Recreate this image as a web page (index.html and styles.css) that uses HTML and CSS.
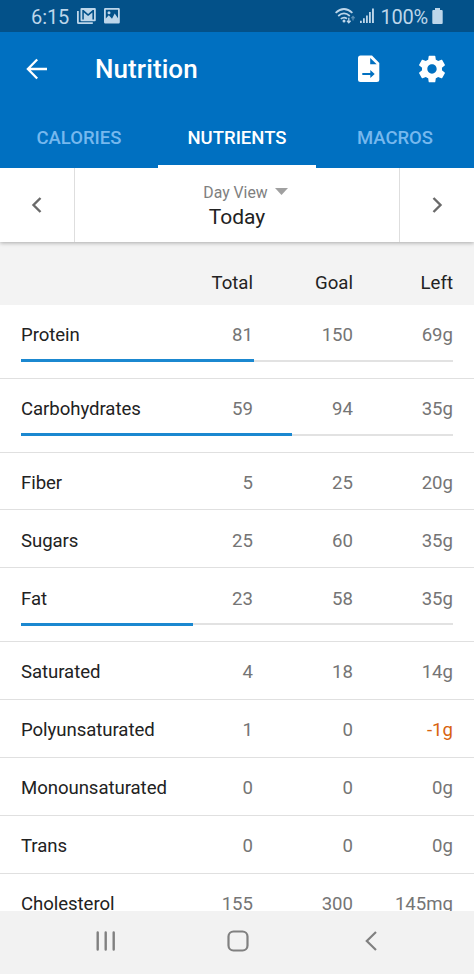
FILE: index.html
```html
<!DOCTYPE html>
<html lang="en">
<head>
<meta charset="utf-8">
<title>Nutrition</title>
<link rel="stylesheet" href="styles.css">
</head>
<body>
<div class="screen">
  <div class="status">
    <span class="clock">6:15</span>
    <svg class="mail" width="20" height="17" viewBox="0 0 20 17" fill="currentColor"><path d="M0 3h1.800v11.300h14V16H1.500Q0 16 0 14.500z"/><path fill-rule="evenodd" d="M4.500 0h13.300q1 0 1 1v11.200q0 1-1 1H4.500q-1 0-1-1V1q0-1 1-1zM5.300 2v9.500h1.500V4.600l4.300 3.500 4.300-3.500v6.900H17V2h-1.300l-4.600 3.900L6.600 2z"/></svg>
    <svg class="photo" width="16" height="16" viewBox="0 0 16 16" fill="currentColor"><path fill-rule="evenodd" d="M1.200 0h13.400q1.200 0 1.200 1.200v13q0 1.200-1.200 1.200H1.200Q0 15.400 0 14.200v-13Q0 0 1.200 0zM1.800 1.800v8.700l3-3.200 3.200 3.500 2.700-5.200 3.300 4.600V1.800zM5 3.200a1.500 1.500 0 1 1 0 3 1.500 1.500 0 0 1 0-3z"/></svg>
    <svg class="wifi" width="21" height="17" viewBox="0 0 21 17" fill="none" stroke="currentColor" stroke-width="1.700"><path d="M.6 4.800Q9 -2.800 17.400 4.800M3.200 8Q9 2.800 14.800 8M5.800 10.900Q9 8.300 12 10.700"/><circle cx="9" cy="13" r="1.500" fill="currentColor" stroke="none"/><path stroke-width="1.300" d="M13.800 9.800v4.700M12 12.800l1.800 1.900 1.800-1.900"/><path opacity=".45" stroke-width="1.300" d="M18 12.500V8.700M16.400 10.200L18 8.500l1.600 1.700"/></svg>
    <svg class="signal" width="15" height="16" viewBox="0 0 15 16" fill="currentColor"><path d="M0 12.700h1.800V15H0zM3 10.300h1.800V15H3zM6 7.500h1.800V15H6zM9 4h1.800v11H9zM12 .5h1.900V15H12z"/></svg>
    <span class="percent">100%</span>
    <svg class="battery" width="11" height="17" viewBox="0 0 11 17" fill="currentColor"><path d="M3 0h5v2h1.700q1 0 1 1v12q0 1-1 1H1.300q-1 0-1-1V3q0-1 1-1H3z"/></svg>
  </div>
  <header class="appbar">
    <svg class="back" width="22" height="22" viewBox="0 0 22 22" fill="none" stroke="#fff" stroke-width="2.300"><path d="M21 11H2M11.200 1.500L1.900 11l9.300 9.500"/></svg>
    <h1>Nutrition</h1>
    <svg class="export" width="22" height="28" viewBox="0 0 22 28"><path fill="#fff" d="M2.500.5H14L21.300 8v16.500q0 2.500-2.500 2.500H2.500Q0 27 0 24.500V3Q0 .5 2.500.5z"/><path fill="#0070c1" d="M12.200 3v6.300h6.500zM4.300 18h8v-3l4.400 4-4.400 4v-3h-8z"/></svg>
    <svg class="gear" width="32" height="32" viewBox="0 0 24 24" fill="#fff"><path d="M19.430 12.980c.04-.32.07-.64.07-.98s-.03-.66-.07-.98l2.110-1.650c.19-.15.24-.42.12-.64l-2-3.460c-.12-.22-.39-.3-.61-.22l-2.490 1c-.52-.4-1.080-.73-1.690-.98l-.38-2.650C14.460 2.180 14.250 2 14 2h-4c-.25 0-.46.18-.49.42l-.38 2.650c-.61.25-1.170.59-1.690.98l-2.490-1c-.23-.09-.49 0-.61.22l-2 3.460c-.13.22-.07.49.12.64l2.110 1.650c-.04.32-.07.65-.07.98s.03.66.07.98l-2.110 1.650c-.19.15-.24.42-.12.64l2 3.460c.12.22.39.3.61.22l2.490-1c.52.4 1.080.73 1.690.98l.38 2.650c.03.24.24.42.49.42h4c.25 0 .46-.18.49-.42l.38-2.650c.61-.25 1.170-.59 1.690-.98l2.490 1c.23.09.49 0 .61-.22l2-3.460c.12-.22.07-.49-.12-.64l-2.110-1.650zM12 15.500c-1.930 0-3.500-1.570-3.500-3.500s1.570-3.500 3.500-3.500 3.500 1.570 3.500 3.500-1.570 3.500-3.500 3.500z"/></svg>
  </header>
  <nav class="tabs">
    <div class="tab">CALORIES</div>
    <div class="tab active">NUTRIENTS</div>
    <div class="tab">MACROS</div>
  </nav>
  <div class="picker">
    <div class="step"><svg width="12" height="16" viewBox="0 0 12 16" fill="none" stroke="#6a6a6a" stroke-width="2.400"><path d="M9.500 1L2.500 8l7 7"/></svg></div>
    <div class="day">
      <div class="view">Day View<svg width="13" height="7" viewBox="0 0 13 7"><path fill="#a0a0a0" d="M0 0h13L6.500 7z"/></svg></div>
      <div class="date">Today</div>
    </div>
    <div class="step"><svg width="12" height="16" viewBox="0 0 12 16" fill="none" stroke="#6a6a6a" stroke-width="2.400"><path d="M2.500 1l7 7-7 7"/></svg></div>
  </div>
  <div class="cols heading"><span></span><span>Total</span><span>Goal</span><span>Left</span></div>
  <main class="list">
    <div class="row goal"><div class="cols"><b>Protein</b><span>81</span><span>150</span><span>69g</span></div><div class="track"><div class="fill" style="width:54%"></div></div></div>
    <div class="row goal"><div class="cols"><b>Carbohydrates</b><span>59</span><span>94</span><span>35g</span></div><div class="track"><div class="fill" style="width:62.800%"></div></div></div>
    <div class="row"><div class="cols"><b>Fiber</b><span>5</span><span>25</span><span>20g</span></div></div>
    <div class="row"><div class="cols"><b>Sugars</b><span>25</span><span>60</span><span>35g</span></div></div>
    <div class="row goal"><div class="cols"><b>Fat</b><span>23</span><span>58</span><span>35g</span></div><div class="track"><div class="fill" style="width:39.700%"></div></div></div>
    <div class="row"><div class="cols"><b>Saturated</b><span>4</span><span>18</span><span>14g</span></div></div>
    <div class="row"><div class="cols"><b>Polyunsaturated</b><span>1</span><span>0</span><span class="over">-1g</span></div></div>
    <div class="row"><div class="cols"><b>Monounsaturated</b><span>0</span><span>0</span><span>0g</span></div></div>
    <div class="row"><div class="cols"><b>Trans</b><span>0</span><span>0</span><span>0g</span></div></div>
    <div class="row"><div class="cols"><b>Cholesterol</b><span>155</span><span>300</span><span>145mg</span></div></div>
  </main>
  <footer class="softkeys">
    <svg width="20" height="20" viewBox="0 0 20 20" fill="none" stroke="#808080" stroke-width="2.400" stroke-linecap="round"><path d="M1.700 1.500v17M9.700 1.500v17M17.700 1.500v17"/></svg>
    <svg class="home" width="22" height="22" viewBox="0 0 22 22" fill="none" stroke="#808080" stroke-width="2.200"><rect x="1.500" y="1.500" width="19" height="19" rx="5"/></svg>
    <svg width="12" height="20" viewBox="0 0 12 20" fill="none" stroke="#808080" stroke-width="2.200"><path d="M11 1L1.800 10l9.200 9"/></svg>
  </footer>
</div>
</body>
</html>
```
FILE: styles.css
```css
* { box-sizing: border-box; }
body { margin: 0; font-family: Roboto, "Liberation Sans", sans-serif; background: #fff; }
svg { display: block; flex: none; }
.screen { width: 474px; height: 974px; display: flex; flex-direction: column; overflow: hidden; }
.screen > * { flex: none; }

.status { height: 32px; background: #035189; color: #bdd6ea; display: flex; align-items: center; padding: 0 31px; font-size: 20px; }
.clock { width: 46px; letter-spacing: -.1px; padding-top: 1px; }
.photo { margin-left: 7px; }
.wifi { margin-left: auto; }
.signal { margin-left: 4px; }
.percent { margin: 0 4px 0 5px; padding-top: 1px; letter-spacing: -.2px; }

.appbar { height: 75px; background: #0070c1; display: flex; align-items: center; padding: 0 26px 1px; color: #fff; }
h1 { margin: 0 auto 0 47px; font-size: 26px; font-weight: 500; letter-spacing: .1px; }
.gear { margin-left: 36px; }

.tabs { height: 61px; background: #0070c1; display: flex; }
.tab { flex: 1; text-align: center; line-height: 62px; font-size: 18.500px; font-weight: 500; color: #76b8ee; }
.active { color: #fff; border-bottom: 3px solid #fff; }

.picker { position: relative; z-index: 1; height: 74px; background: #fff; display: flex; box-shadow: 0 1px 4px rgba(0,0,0,.3); clip-path: inset(0 0 -8px 0); }
.step { width: 74px; display: flex; align-items: center; justify-content: center; }
.day { flex: 1; border-left: 1px solid #dedede; border-right: 1px solid #dedede; padding-top: 14px; text-align: center; }
.view { display: flex; justify-content: center; align-items: center; font-size: 15.800px; line-height: 21px; color: #808080; gap: 7px; padding-left: 17px; }
.view svg { margin-top: -2px; }
.date { font-size: 21px; line-height: 29px; color: #222; }

.cols { display: grid; grid-template-columns: 1fr 82px 100px 100px; font-size: 18.600px; line-height: 24px; letter-spacing: -.06px; padding: 0 21px; color: #757575; }
.cols span { text-align: right; letter-spacing: 0; }
.cols b { font-weight: 400; color: #222; }
.cols .over { color: #d8640f; }
.heading { height: 63px; background: #f3f3f3; padding-top: 29px; color: #222; }

.list { height: 606px; overflow: hidden; }
.row { height: 57.900px; padding-top: 18.300px; border-bottom: 1px solid #e0e0e0; }
.goal { height: 73.800px; }
.track { height: 2px; margin: 12.700px 21px 0; background: #e2e2e2; display: flex; align-items: center; }
.fill { height: 3px; background: #1b88d0; }

.softkeys { flex: 1; background: #f2f2f2; display: flex; align-items: center; padding: 0 97px 3px 96px; justify-content: space-between; }
.home { margin-right: 5px; }
```
